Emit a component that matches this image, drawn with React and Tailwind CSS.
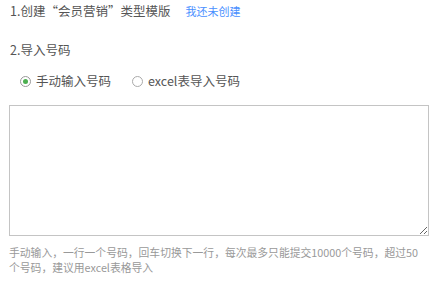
export default function App() {
  return (
    <div className="w-[443px] h-[281px] bg-white text-[#555] text-[12.5px] font-['Noto_Sans_CJK_SC',sans-serif] pl-[10px] pr-[15px] pt-[2px]">
      {/* 步骤一 */}
      <div className="flex items-center h-[18px] leading-[18px]">
        <span>1.创建“会员营销”类型模版</span>
        <a className="ml-[15px] text-[11px] text-[#4a90ff]">我还未创建</a>
      </div>

      {/* 步骤二 */}
      <div className="mt-[21px] h-[18px] leading-[18px]">2.导入号码</div>

      <div className="flex items-center mt-[12px] h-[20px] pl-[10px] gap-[21px]">
        <label className="flex items-center gap-[5px]">
          <span className="w-[11px] h-[11px] rounded-full border border-[#999] flex items-center justify-center">
            <span className="w-[5px] h-[5px] rounded-full bg-[#4caf50]"></span>
          </span>
          <span>手动输入号码</span>
        </label>
        <label className="flex items-center gap-[5px]">
          <span className="w-[11px] h-[11px] rounded-full border border-[#aaa]"></span>
          <span>excel表导入号码</span>
        </label>
      </div>

      <textarea className="block mt-[14px] -ml-[1px] w-[420px] h-[131px] border border-[#c4c4c4] outline-none resize" />

      <p className="mt-[9px] -ml-[1px] text-[10.8px] leading-[15px] text-[#999] w-[418px]">
        手动输入，一行一个号码，回车切换下一行，每次最多只能提交10000个号码，超过50个号码，建议用excel表格导入
      </p>
    </div>
  )
}
